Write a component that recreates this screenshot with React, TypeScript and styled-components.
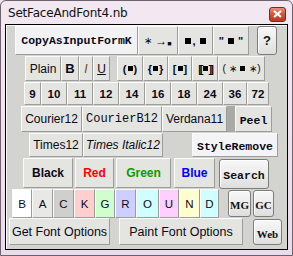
import React from "react";
import styled, { createGlobalStyle, css } from "styled-components";

const GlobalStyle = createGlobalStyle`
  html, body {
    margin: 0;
    padding: 0;
    background: #efe4ef;
  }
  * {
    box-sizing: border-box;
  }
`;

const Window = styled.div`
  width: 293px;
  height: 256px;
  background: linear-gradient(180deg, #f2e8f2 0%, #eadcea 100%);
  border: 1px solid #6e626e;
  border-radius: 6px 6px 0 0;
  display: flex;
  flex-direction: column;
  font-family: "Liberation Sans", Arial, sans-serif;
`;

const TitleBar = styled.div`
  height: 23px;
  display: flex;
  align-items: center;
  justify-content: space-between;
  padding: 1px 6px 0 7px;
`;

const Title = styled.span`
  font-family: "DejaVu Sans", sans-serif;
  font-size: 12px;
  letter-spacing: -0.2px;
  color: #111;
`;

const CloseButton = styled.div`
  width: 17px;
  height: 15px;
  margin-top: 2px;
  border: 1px solid #7a2a1a;
  border-radius: 3px;
  background: linear-gradient(180deg, #e9907c 0%, #d05a3e 45%, #b8381e 100%);
  display: flex;
  align-items: center;
  justify-content: center;
`;

const Panel = styled.div`
  margin: 0 0 0 4px;
  width: 283px;
  height: 226px;
  border: 1px solid #000;
  background: #d3d3cf;
  display: flex;
  flex-direction: column;
  box-shadow: inset 1px 1px 0 #fafafa;
`;

const Row = styled.div<{ $pl: number; $h: number }>`
  display: flex;
  align-items: flex-start;
  padding-left: ${(p) => p.$pl}px;
  height: ${(p) => p.$h}px;
`;

type Face = "sans" | "mono" | "serif" | "bold";

const faceCss = {
  sans: css`
    font-family: "Liberation Sans", Arial, sans-serif;
    font-size: 12px;
  `,
  bold: css`
    font-family: "Liberation Sans", Arial, sans-serif;
    font-size: 11.5px;
    font-weight: bold;
  `,
  mono: css`
    font-family: "Liberation Mono", "Courier New", monospace;
    font-size: 11.5px;
    font-weight: bold;
  `,
  serif: css`
    font-family: "Liberation Serif", "Times New Roman", serif;
    font-size: 11px;
    font-weight: bold;
  `
};

const FlatButton = styled.div<{
  $w: number;
  $h: number;
  $bg?: string;
  $fg?: string;
  $face?: Face;
  $ml?: number;
  $italic?: boolean;
}>`
  width: ${(p) => p.$w}px;
  height: ${(p) => p.$h}px;
  margin-left: ${(p) => p.$ml || 0}px;
  background: ${(p) => p.$bg || "#e4e4e0"};
  color: ${(p) => p.$fg || "#0a0a1a"};
  border-top: 1px solid #fbfbfb;
  border-left: 1px solid #fbfbfb;
  border-right: 1px solid #9c9c98;
  border-bottom: 1px solid #9c9c98;
  display: flex;
  align-items: center;
  justify-content: center;
  white-space: nowrap;
  overflow: hidden;
  ${(p) => faceCss[p.$face || "sans"]};
  font-style: ${(p) => (p.$italic ? "italic" : "normal")};
`;

const RoundButton = styled.div<{ $w: number; $h: number; $ml?: number; $mt?: number; $face?: Face }>`
  width: ${(p) => p.$w}px;
  height: ${(p) => p.$h}px;
  margin-left: ${(p) => p.$ml || 0}px;
  margin-top: ${(p) => p.$mt || 0}px;
  border: 1px solid #7c7c7c;
  border-radius: 3px;
  background: linear-gradient(180deg, #f7f7f7 0%, #ececec 50%, #dedede 100%);
  box-shadow: inset 1px 1px 0 #ffffff;
  color: #111;
  display: flex;
  align-items: center;
  justify-content: center;
  white-space: nowrap;
  ${(p) => faceCss[p.$face || "serif"]};
`;

const Spacer = styled.div<{ $w: number; $h: number; $dark?: boolean }>`
  width: ${(p) => p.$w}px;
  height: ${(p) => p.$h}px;
  background: ${(p) => (p.$dark ? "#a9a9a5" : "transparent")};
`;

const Box = styled.span<{ $s?: number }>`
  display: inline-block;
  width: ${(p) => p.$s || 6}px;
  height: ${(p) => p.$s || 6}px;
  background: #000;
  margin: 0 1px;
`;

const Sym = styled.span<{ $size?: number; $bold?: boolean }>`
  font-family: "Liberation Sans", Arial, sans-serif;
  font-size: ${(p) => p.$size || 11}px;
  font-weight: ${(p) => (p.$bold ? "bold" : "normal")};
  display: inline-flex;
  align-items: center;
`;

const sizes = [
  { t: "9", w: 17 },
  { t: "10", w: 26 },
  { t: "11", w: 26 },
  { t: "12", w: 26 },
  { t: "14", w: 26 },
  { t: "16", w: 26 },
  { t: "18", w: 26 },
  { t: "24", w: 26 },
  { t: "36", w: 24 },
  { t: "72", w: 22 }
];

const swatches = [
  { t: "B", w: 20, bg: "#ffffff" },
  { t: "A", w: 21, bg: "#e8e8e6" },
  { t: "C", w: 21, bg: "#cfcfcd" },
  { t: "K", w: 21, bg: "#ffcfcf" },
  { t: "G", w: 20, bg: "#cfffcf" },
  { t: "R", w: 21, bg: "#cfcfff" },
  { t: "O", w: 23, bg: "#cfffff" },
  { t: "U", w: 20, bg: "#ffcfff" },
  { t: "N", w: 21, bg: "#ffffcf" },
  { t: "D", w: 19, bg: "#cfffff" }
];

export default function App() {
  return (
    <>
      <GlobalStyle />
      <Window>
        <TitleBar>
          <Title>SetFaceAndFont4.nb</Title>
          <CloseButton>
            <svg width="9" height="8" viewBox="0 0 9 8">
              <path d="M1 1 L8 7 M8 1 L1 7" stroke="#fff" strokeWidth="2.2" />
            </svg>
          </CloseButton>
        </TitleBar>
        <Panel>
          <Row $pl={9} $h={31} style={{ paddingTop: 1 }}>
            <FlatButton $w={123} $h={29} $bg="#f2f2f4" $face="mono">
              CopyAsInputFormK
            </FlatButton>
            <FlatButton $w={40} $h={29}>
              <Sym $size={10}>
                ∗&nbsp;<span style={{ fontSize: 12 }}>→</span>
                <span style={{ fontSize: 7, marginTop: 6 }}>■</span>
              </Sym>
            </FlatButton>
            <FlatButton $w={35} $h={29}>
              <Sym $bold>
                <Box />,&nbsp;<Box />
              </Sym>
            </FlatButton>
            <FlatButton $w={36} $h={29}>
              <Sym $bold>
                "&nbsp;<Box />&nbsp;"
              </Sym>
            </FlatButton>
            <RoundButton $w={20} $h={29} $ml={8} $face="bold" style={{ fontSize: 13 }}>
              ?
            </RoundButton>
          </Row>
          <Row $pl={19} $h={26}>
            <FlatButton $w={36} $h={25}>Plain</FlatButton>
            <FlatButton $w={18} $h={25} $face="bold" style={{ fontSize: 13 }}>
              B
            </FlatButton>
            <FlatButton $w={14} $h={25} $italic $fg="#6a4a1a">
              I
            </FlatButton>
            <FlatButton $w={17} $h={25} style={{ textDecoration: "underline" }}>
              U
            </FlatButton>
            <FlatButton $w={26} $h={25} $ml={7}>
              <Sym $bold>
                (<Box $s={5} />)
              </Sym>
            </FlatButton>
            <FlatButton $w={25} $h={25}>
              <Sym $bold>
                {"{"}
                <Box $s={5} />
                {"}"}
              </Sym>
            </FlatButton>
            <FlatButton $w={24} $h={25}>
              <Sym $bold>
                [<Box $s={5} />]
              </Sym>
            </FlatButton>
            <FlatButton $w={26} $h={25}>
              <Sym $bold style={{ letterSpacing: -2 }}>
                [[<Box $s={5} />]]
              </Sym>
            </FlatButton>
            <FlatButton $w={47} $h={25}>
              <Sym $size={10}>
                (&nbsp;∗&nbsp;<Box $s={5} />&nbsp;∗)
              </Sym>
            </FlatButton>
          </Row>
          <Row $pl={18} $h={24}>
            {sizes.map((s) => (
              <FlatButton key={s.t} $w={s.w} $h={23} $face="bold">
                {s.t}
              </FlatButton>
            ))}
          </Row>
          <Row $pl={15} $h={27}>
            <FlatButton $w={61} $h={26}>Courier12</FlatButton>
            <FlatButton $w={80} $h={26} $face="mono" style={{ fontWeight: "normal", fontSize: 12 }}>
              CourierB12
            </FlatButton>
            <FlatButton $w={65} $h={26}>Verdana11</FlatButton>
            <Spacer $w={8} $h={26} $dark />
            <FlatButton $w={37} $h={26} $face="mono" style={{ paddingTop: 3 }}>
              Peel
            </FlatButton>
          </Row>
          <Row $pl={23} $h={25}>
            <FlatButton $w={54} $h={24}>Times12</FlatButton>
            <FlatButton $w={80} $h={24} $italic>
              Times Italic12
            </FlatButton>
            <Spacer $w={29} $h={24} />
            <FlatButton $w={86} $h={24} $bg="#f4f4f6" $face="mono" style={{ paddingTop: 2 }}>
              StyleRemove
            </FlatButton>
          </Row>
          <Row $pl={17} $h={31}>
            <FlatButton $w={50} $h={30} $face="bold" style={{ fontSize: 12 }}>
              Black
            </FlatButton>
            <FlatButton $w={39} $h={30} $ml={2} $fg="#ff0000" $face="bold" style={{ fontSize: 12 }}>
              Red
            </FlatButton>
            <FlatButton $w={55} $h={30} $ml={2} $fg="#00a000" $face="bold" style={{ fontSize: 12 }}>
              Green
            </FlatButton>
            <FlatButton $w={41} $h={30} $ml={3} $fg="#0000ff" $face="bold" style={{ fontSize: 12 }}>
              Blue
            </FlatButton>
            <RoundButton $w={50} $h={30} $ml={4} $mt={1} $face="mono" style={{ paddingTop: 3 }}>
              Search
            </RoundButton>
          </Row>
          <Row $pl={6} $h={29}>
            {swatches.map((s) => (
              <FlatButton key={s.t} $w={s.w} $h={29} $bg={s.bg} style={{ fontSize: 11.5 }}>
                {s.t}
              </FlatButton>
            ))}
            <RoundButton $w={23} $h={27} $ml={9} $mt={1} style={{ paddingTop: 3 }}>
              MG
            </RoundButton>
            <RoundButton $w={21} $h={27} $ml={2} $mt={1} style={{ paddingTop: 3 }}>
              GC
            </RoundButton>
          </Row>
          <Row $pl={3} $h={28}>
            <FlatButton $w={101} $h={27} style={{ fontSize: 12.5 }}>
              Get Font Options
            </FlatButton>
            <FlatButton $w={124} $h={27} $ml={9} style={{ fontSize: 12.5 }}>
              Paint Font Options
            </FlatButton>
            <RoundButton $w={29} $h={26} $ml={10} $mt={1} style={{ paddingTop: 3 }}>
              Web
            </RoundButton>
          </Row>
        </Panel>
      </Window>
    </>
  );
}
